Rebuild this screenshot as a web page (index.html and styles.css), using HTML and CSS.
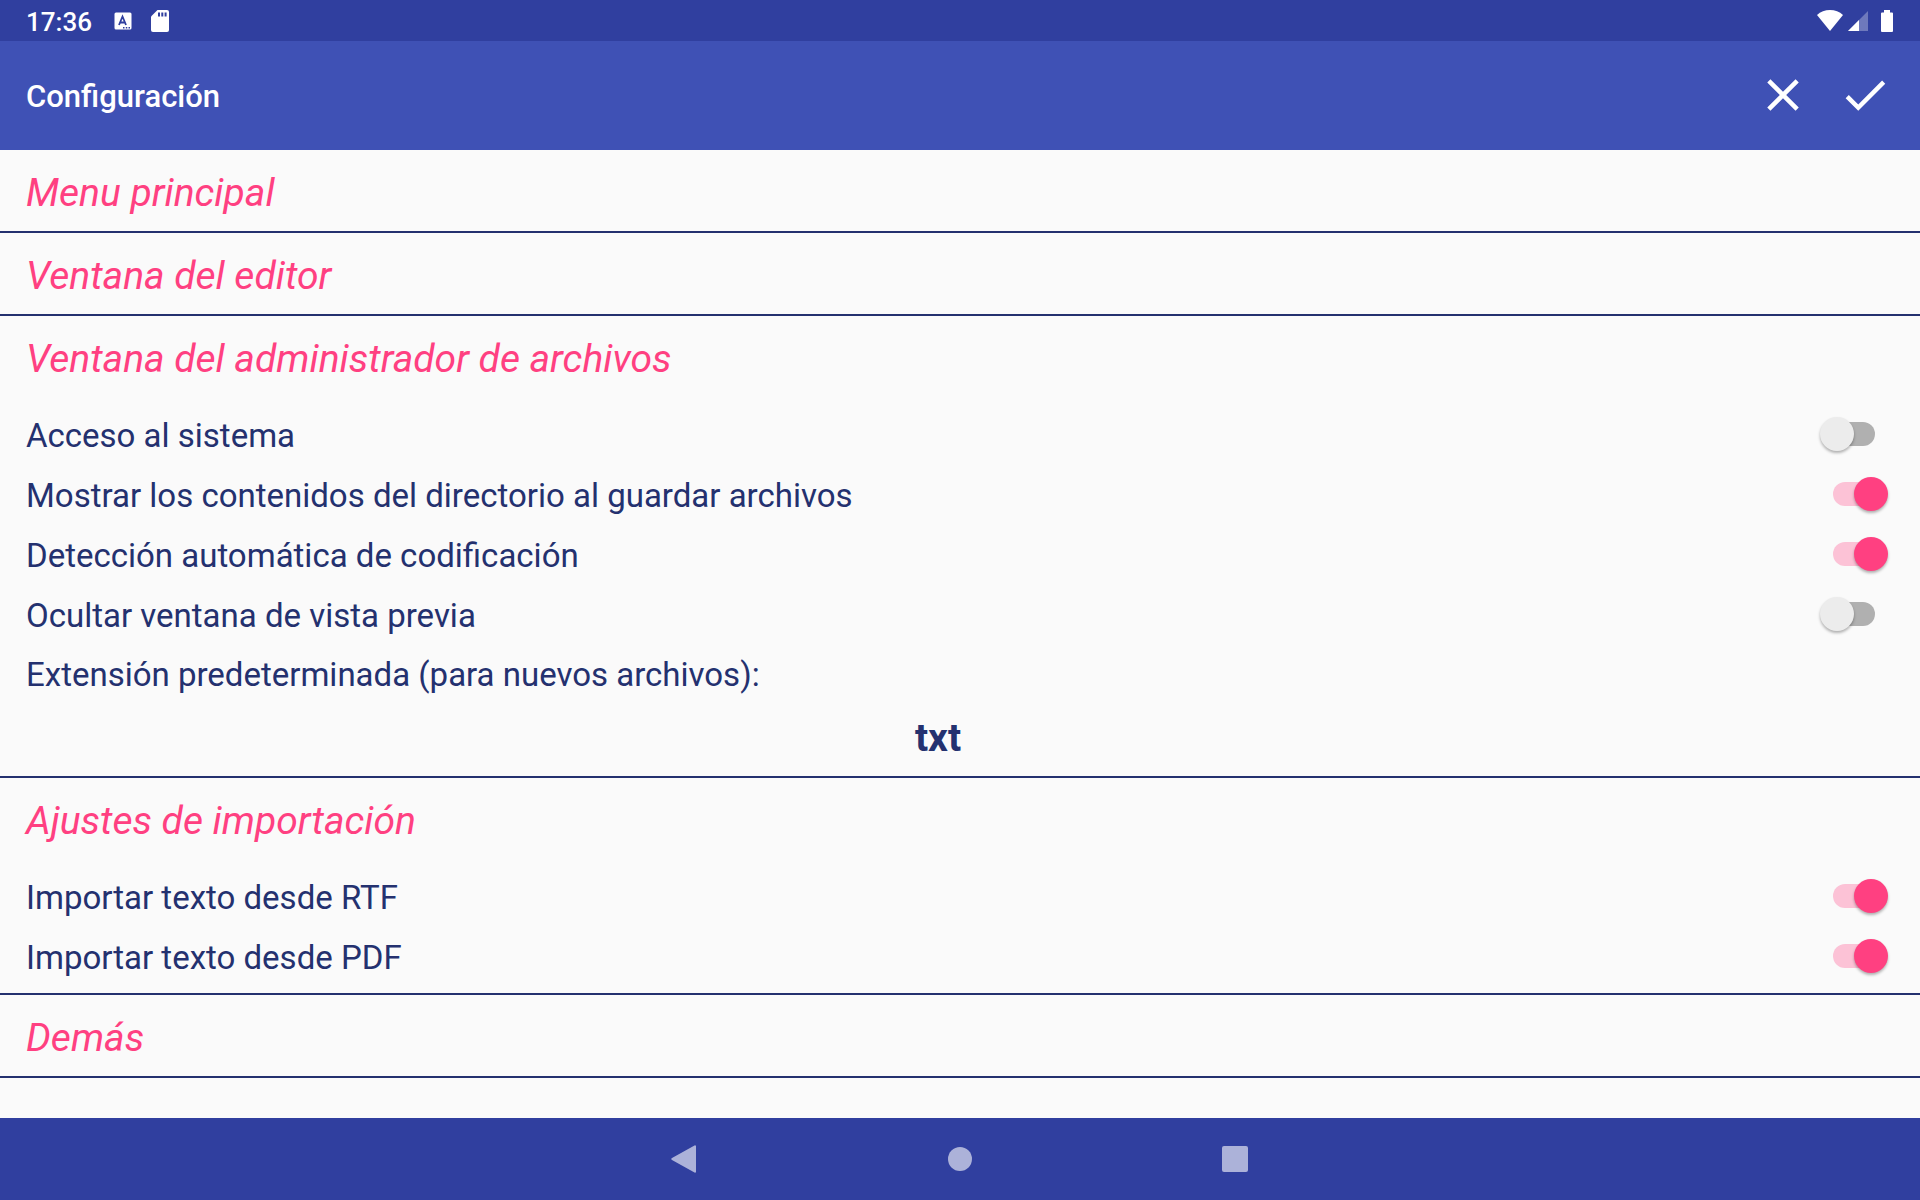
FILE: index.html
```html
<!DOCTYPE html>
<html lang="es">
<head>
  <meta charset="UTF-8">
  <meta name="viewport" content="width=device-width, initial-scale=1.0">
  <title>Configuración</title>
  <link rel="stylesheet" href="styles.css">
</head>
<body>
  <div class="status-bar">
    <span class="clock">17:36</span>
    <svg class="icon-lang" width="18" height="18" viewBox="0 0 18 18">
      <rect x="0.5" y="0.5" width="17" height="17" rx="1.5" fill="#fff"/>
      <path d="M5 13L8.5 4.5L12 13M6 10.5H11" fill="none" stroke="#303f9f" stroke-width="1.8"/>
      <path d="M9 15h1.500v1.500H9zM11.800 15h1.500v1.500h-1.500zM14.500 15H16v1.500h-1.500z" fill="#303f9f"/>
    </svg>
    <svg class="icon-sd" width="18" height="22" viewBox="0 0 18 22">
      <path d="M6.500 0H16a2 2 0 0 1 2 2v18a2 2 0 0 1-2 2H2a2 2 0 0 1-2-2V6.500z" fill="#fff"/>
      <path d="M7 2.500h2v4H7zM10.300 2.500h2v4h-2zM13.600 2.500h2v4h-2z" fill="#303f9f"/>
    </svg>
    <div class="status-right">
      <svg width="26" height="21" viewBox="0 0 26 21">
        <path d="M13 21L0 5C3.500 1.700 8 0 13 0s9.500 1.700 13 5z" fill="#fff"/>
      </svg>
      <svg class="icon-signal" width="20" height="20" viewBox="0 0 20 20">
        <path d="M0 20L20 0v20z" fill="#fff" fill-opacity="0.3"/>
        <path d="M0 20L11 9v11z" fill="#fff"/>
      </svg>
      <svg class="icon-battery" width="12" height="22" viewBox="0 0 12 22">
        <path d="M3 0h6v2.500h2a1 1 0 0 1 1 1V21a1 1 0 0 1-1 1H1a1 1 0 0 1-1-1V3.500a1 1 0 0 1 1-1h2z" fill="#fff"/>
      </svg>
    </div>
  </div>

  <header class="app-bar">
    <h1>Configuración</h1>
    <div class="actions">
      <button type="button" class="icon-btn" aria-label="Cancelar">
        <svg width="54" height="54" viewBox="0 0 24 24"><path d="M19 6.410L17.590 5 12 10.590 6.410 5 5 6.410 10.590 12 5 17.590 6.410 19 12 13.410 17.590 19 19 17.590 13.410 12z" fill="#fff"/></svg>
      </button>
      <button type="button" class="icon-btn" aria-label="Aceptar">
        <svg width="54" height="54" viewBox="0 0 24 24"><path d="M9 16.200L4.800 12l-1.400 1.400L9 19 21 7l-1.400-1.400z" fill="#fff"/></svg>
      </button>
    </div>
  </header>

  <main>
    <section>
      <h2>Menu principal</h2>
    </section>

    <section>
      <h2>Ventana del editor</h2>
    </section>

    <section>
      <h2>Ventana del administrador de archivos</h2>
      <div class="options">
        <div class="row">
          <label for="sistema">Acceso al sistema</label>
          <input type="checkbox" class="switch" id="sistema">
        </div>
        <div class="row">
          <label for="contenidos">Mostrar los contenidos del directorio al guardar archivos</label>
          <input type="checkbox" class="switch" id="contenidos" checked>
        </div>
        <div class="row">
          <label for="codificacion">Detección automática de codificación</label>
          <input type="checkbox" class="switch" id="codificacion" checked>
        </div>
        <div class="row">
          <label for="previa">Ocultar ventana de vista previa</label>
          <input type="checkbox" class="switch" id="previa">
        </div>
        <div class="field">
          <label for="extension">Extensión predeterminada (para nuevos archivos):</label>
          <input type="text" class="extension" id="extension" value="txt">
        </div>
      </div>
    </section>

    <section>
      <h2>Ajustes de importación</h2>
      <div class="options">
        <div class="row">
          <label for="rtf">Importar texto desde RTF</label>
          <input type="checkbox" class="switch" id="rtf" checked>
        </div>
        <div class="row">
          <label for="pdf">Importar texto desde PDF</label>
          <input type="checkbox" class="switch" id="pdf" checked>
        </div>
      </div>
    </section>

    <section>
      <h2>Demás</h2>
    </section>
  </main>

  <nav class="nav-bar">
    <button type="button" class="nav-btn" aria-label="Atrás">
      <svg width="28" height="28" viewBox="0 0 28 28"><path d="M23.500 0.500a1 1 0 0 1 1.500 1v25a1 1 0 0 1-1.500 1L1 15a1.200 1.200 0 0 1 0-2z" fill="#acb2d9"/></svg>
    </button>
    <button type="button" class="nav-btn" aria-label="Inicio">
      <svg width="28" height="28" viewBox="0 0 28 28"><circle cx="14" cy="14" r="12" fill="#acb2d9"/></svg>
    </button>
    <button type="button" class="nav-btn" aria-label="Recientes">
      <svg width="28" height="28" viewBox="0 0 28 28"><rect x="1" y="1" width="26" height="26" rx="2" fill="#acb2d9"/></svg>
    </button>
  </nav>
</body>
</html>
```

FILE: styles.css
```css
* {
  box-sizing: border-box;
}

body {
  margin: 0;
  min-height: 100vh;
  display: flex;
  flex-direction: column;
  background-color: #fafafa;
  color: #24316f;
  font-family: Roboto, "Noto Sans", sans-serif;
}

svg {
  display: block;
}

button {
  padding: 0;
  border: none;
  background: none;
  cursor: pointer;
}

/* status bar */
.status-bar {
  height: 41px;
  padding: 0 27px 0 26px;
  display: flex;
  align-items: center;
  background-color: #303f9f;
  color: #fff;
}

.clock {
  font-size: 26px;
  font-weight: 500;
  line-height: 32px;
  padding-top: 2px;
}

.icon-lang {
  margin-left: 22px;
}

.icon-sd {
  margin-left: 19px;
}

.status-right {
  display: flex;
  align-items: center;
  margin-left: auto;
}

.icon-signal {
  margin-left: 5px;
}

.icon-battery {
  margin-left: 13px;
}

/* title bar */
.app-bar {
  height: 109px;
  padding: 0 28px 0 26px;
  display: flex;
  align-items: center;
  justify-content: space-between;
  background-color: #3f51b5;
  color: #fff;
}

.app-bar h1 {
  margin: 0;
  padding-top: 2px;
  font-size: 31px;
  font-weight: 500;
}

.actions {
  display: flex;
  gap: 28px;
  padding-bottom: 2px;
}

/* settings list */
main {
  flex: 1;
}

section {
  border-bottom: 2px solid #24316f;
}

h2 {
  margin: 0;
  padding: 20px 26px 15px;
  color: #ff4081;
  font-size: 39px;
  font-weight: 400;
  font-style: italic;
  line-height: 46px;
}

.options {
  padding: 7px 0;
}

.row {
  display: flex;
  align-items: center;
  justify-content: space-between;
  height: 60px;
  padding: 0 32px 0 26px;
}

label {
  padding-top: 3px;
  font-size: 33px;
  line-height: 40px;
}

.switch {
  appearance: none;
  position: relative;
  width: 68px;
  height: 34px;
  margin: 0;
  cursor: pointer;
}

.switch::before {
  content: "";
  position: absolute;
  top: 5px;
  left: 13px;
  width: 42px;
  height: 24px;
  border-radius: 12px;
  background-color: #b0b0b0;
}

.switch::after {
  content: "";
  position: absolute;
  top: 0;
  left: 0;
  width: 34px;
  height: 34px;
  border-radius: 50%;
  background-color: #ececec;
  box-shadow: 0 2px 3px rgba(0, 0, 0, 0.3);
}

.switch:checked::before {
  background-color: #fcc2d6;
}

.switch:checked::after {
  left: 34px;
  background-color: #ff4081;
}

.field {
  display: flex;
  flex-direction: column;
  padding: 8px 70px 0 26px;
}

.extension {
  height: 74px;
  padding: 12px 0 0;
  border: none;
  background: none;
  color: inherit;
  font-family: inherit;
  font-size: 39px;
  font-weight: 700;
  text-align: center;
}

/* navigation bar */
.nav-bar {
  height: 82px;
  display: flex;
  align-items: center;
  justify-content: center;
  gap: 247px;
  background-color: #303f9f;
}
```
